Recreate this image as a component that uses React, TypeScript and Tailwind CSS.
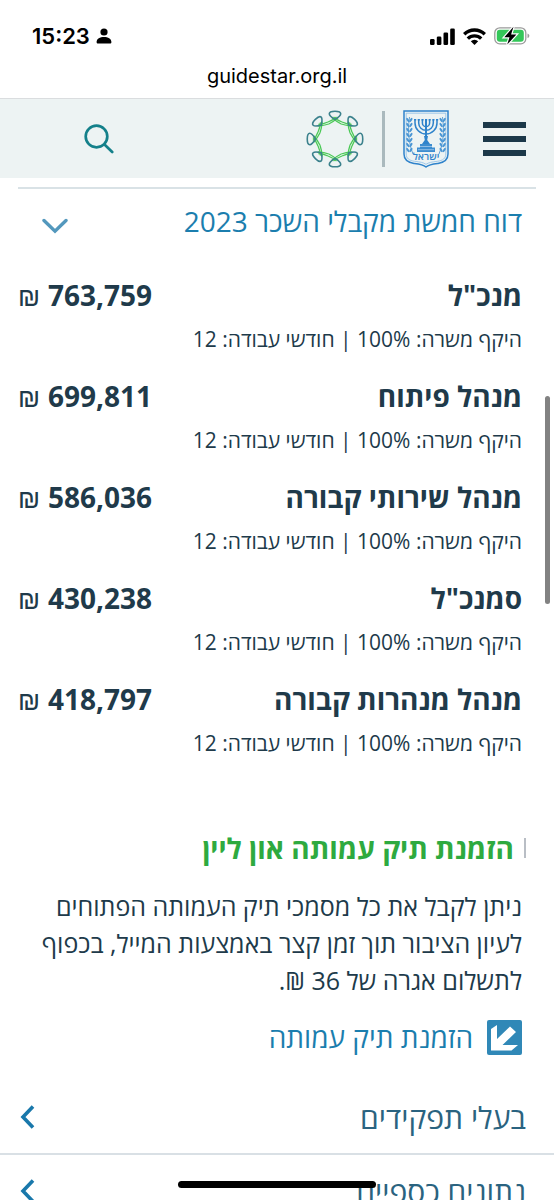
import React from 'react';

interface Salary {
  role: string;
  amount: string;
}

const SALARIES: Salary[] = [
  { role: 'מנכ"ל', amount: '763,759' },
  { role: 'מנהל פיתוח', amount: '699,811' },
  { role: 'מנהל שירותי קבורה', amount: '586,036' },
  { role: 'סמנכ"ל', amount: '430,238' },
  { role: 'מנהל מנהרות קבורה', amount: '418,797' },
];

const SECTIONS = ['בעלי תפקידים', 'נתונים כספיים'];

const IconPerson = () => (
  <svg width="16" height="16" viewBox="0 0 16 16" aria-hidden="true">
    <circle cx="8" cy="4" r="3.6" />
    <path d="M.6 14C.6 10.6 4 8.9 8 8.9s7.400 1.700 7.400 5.100c0 1-.5 1.500-1.500 1.500H2.100c-1 0-1.500-.5-1.500-1.500z" />
  </svg>
);

const IconSignal = () => (
  <svg width="25" height="17" viewBox="0 0 25 17" aria-hidden="true">
    <rect x="0" y="11" width="4.600" height="6" rx="1.300" />
    <rect x="6.800" y="8.500" width="4.600" height="8.500" rx="1.300" />
    <rect x="13.500" y="4.500" width="4.600" height="12.500" rx="1.300" />
    <rect x="20.200" y="0.500" width="4.600" height="16.500" rx="1.300" />
  </svg>
);

const IconWifi = () => (
  <svg width="23" height="17" viewBox="0 0 23 17" fill="none" stroke="#000" strokeWidth="3.400" aria-hidden="true">
    <path d="M1.200 6.200a14.700 14.700 0 0 1 20.600 0" />
    <path d="M4.800 10.600a9.500 9.500 0 0 1 13.400 0" />
    <path d="M7.800 13.300a5.300 5.300 0 0 1 7.400 0L11.500 17z" fill="#000" stroke="none" />
  </svg>
);

const IconBattery = () => (
  <svg width="36" height="20" viewBox="0 0 36 20" aria-hidden="true">
    <rect x=".8" y="1.800" width="31" height="16" rx="5" fill="#fff" stroke="#9b9b9b" strokeWidth="1.300" />
    <rect x="2.800" y="3.800" width="27" height="12" rx="3" fill="#34c759" />
    <path d="M33.500 7.500c2.400.8 2.400 3.800 0 4.600z" fill="#9b9b9b" />
    <path d="M19.500.8 10.300 11.300h5.200L13.200 18.600 22.400 8.400h-5.300z" stroke="#fff" strokeWidth="2.400" paintOrder="stroke" />
  </svg>
);

const IconSearch = () => (
  <svg width="30" height="30" viewBox="0 0 30 30" fill="none" stroke="#14808a" strokeWidth="2.700" strokeLinecap="round" aria-hidden="true">
    <circle cx="12.500" cy="12.500" r="10.800" />
    <path d="m20.500 20.500 7.700 7.500" />
  </svg>
);

const LOOPS = [0, 45, 90, 135, 180, 225, 270, 315];

const GuidestarLogo = () => (
  <svg width="58" height="58" viewBox="-29 -29 58 58" fill="none" aria-hidden="true">
    {LOOPS.map((angle) => (
      <g key={angle} transform={`rotate(${angle})`}>
        <g stroke="#4cc957" strokeWidth="1.300">
          <path d="M-7-17Q-2.500-18.600 1.500-22" />
          <path d="M-6.200-15Q-2-16.900 3.200-21.400" />
          <path d="M7-17Q2.500-18.600-1.500-22" />
          <path d="M6.200-15Q2-16.900-3.200-21.400" />
        </g>
        <path d="M0-19.400C-2.500-21-5.700-23.300-5.700-25.200C-5.700-28.600 5.700-28.600 5.700-25.200C5.700-23.300 2.500-21 0-19.400z" stroke="#3b818c" strokeWidth="1.600" />
      </g>
    ))}
  </svg>
);

const LEAVES = [10, 15, 20, 25, 30, 35, 40];

const OliveBranch = () => (
  <g>
    <path d="M6.500 7C5 18 5 32 10 44" stroke="#3f8ed0" strokeWidth=".8" fill="none" />
    {LEAVES.map((y) => (
      <g key={y} fill="#4b96d4">
        <ellipse cx="4.800" cy={y} rx="1.100" ry="2.500" transform={`rotate(-32 4.800 ${y})`} />
        <ellipse cx="7.900" cy={y} rx="1.100" ry="2.500" transform={`rotate(32 7.900 ${y})`} />
      </g>
    ))}
  </g>
);

const StateEmblem = () => (
  <svg width="46" height="58" viewBox="0 0 46 58" fill="none" aria-hidden="true">
    <path d="M1 1h44v43c0 6-4 8.500-10 9.500-6 .7-9 1-12 3.500-3-2.500-6-2.800-12-3.500C5 52.500 1 50 1 44z" stroke="#2f83cb" strokeWidth="1.500" />
    <path d="M3.200 3.200h39.600V44c0 4.500-3 6.500-8.500 7.300-5.500.7-8.300 1-11.300 3-3-2-5.800-2.300-11.300-3C6.200 50.500 3.200 48.500 3.200 44z" stroke="#8cbde6" strokeWidth=".8" />
    <OliveBranch />
    <g transform="matrix(-1 0 0 1 46 0)">
      <OliveBranch />
    </g>
    <g stroke="#2f83cb" strokeWidth="1.500">
      <path d="M12 10v3a11 11 0 0 0 22 0v-3" />
      <path d="M15.700 10v3a7.300 7.300 0 0 0 14.600 0v-3" />
      <path d="M19.400 10v3a3.600 3.600 0 0 0 7.200 0v-3" />
      <path d="M23 9v24" strokeWidth="2" />
      <path d="M11 9.700h2.200m1.500 0h2.200m1.500 0h2.200m1.400 0h2.200m1.400 0h2.200m1.500 0h2.200m1.500 0h2.200" />
    </g>
    <path d="M21 26h4l-.8 4 2.800 4h-8l2.800-4z" fill="#2f83cb" />
    <path d="M17 34h12v3.500h3V42H14v-4.500h3z" fill="#3d8dd0" />
    <path d="M17 36.500h12M15 39.700h16" stroke="#b6d4ee" strokeWidth=".7" />
    <text x="23" y="50" textAnchor="middle" fontSize="10" fontWeight="600" fill="#2f83cb" fontFamily="'Open Sans', sans-serif">
      ישראל
    </text>
  </svg>
);

const IconChevronDown = () => (
  <svg width="26" height="16" viewBox="0 0 26 16" fill="none" stroke="#5398bd" strokeWidth="3.400" strokeLinecap="round" aria-hidden="true">
    <path d="m2 2.500 11 10.700L24 2.500" />
  </svg>
);

const IconChevronLeft = () => (
  <svg width="15" height="24" viewBox="0 0 15 24" fill="none" stroke="#1978ab" strokeWidth="3.600" aria-hidden="true">
    <path d="M13 1.500 3 12l10 10.500" />
  </svg>
);

const IconExternal = () => (
  <svg width="35" height="35" viewBox="0 0 35 35" className="shrink-0" aria-hidden="true">
    <rect width="35" height="35" rx="2" fill="#3088b7" />
    <path d="M4 9 10 5v14L23 6.500l6 5.500L15.500 25H31l-6.500 5.500H4z" fill="#fff" />
  </svg>
);

const StatusBar = () => (
  <div dir="ltr" className="flex h-14 items-center justify-between pt-4 pr-6 pl-8">
    <div className="flex items-center gap-1.5 font-[Inter,sans-serif] text-[22px] leading-7 font-semibold">
      15:23
      <IconPerson />
    </div>
    <div className="flex items-center gap-2">
      <IconSignal />
      <IconWifi />
      <IconBattery />
    </div>
  </div>
);

const Header = () => (
  <header className="flex h-20 shrink-0 items-center justify-between border-t border-[#dadddf] bg-[#edf3f3] pr-7 pl-21">
    <div className="flex items-center gap-[18px]">
      <button type="button" aria-label="תפריט" className="flex w-[43px] flex-col gap-2">
        <span className="h-1.5 bg-[#1c3849]" />
        <span className="h-1.5 bg-[#1c3849]" />
        <span className="h-1.5 bg-[#1c3849]" />
      </button>
      <a href="#state" aria-label="מדינת ישראל" className="pr-4">
        <StateEmblem />
      </a>
      <span className="h-14 w-[3px] bg-[#aab9bd]" />
      <a href="#home" aria-label="גיידסטאר">
        <GuidestarLogo />
      </a>
    </div>
    <button type="button" aria-label="חיפוש">
      <IconSearch />
    </button>
  </header>
);

const SalaryRow: React.FC<Salary> = ({ role, amount }) => (
  <li className="h-[101px]">
    <div className="flex items-center justify-between text-[28px] leading-10 font-bold">
      <h3>{role}</h3>
      <p dir="ltr" className="flex items-baseline gap-2">
        <span className="font-['Liberation_Sans',sans-serif] text-[26px] leading-none font-normal">₪</span> {amount}
      </p>
    </div>
    <p className="mt-1 text-[21px] leading-10">היקף משרה: 100% | חודשי עבודה: 12</p>
  </li>
);

const App: React.FC = () => {
  return (
    <div dir="rtl" className="relative flex h-screen flex-col overflow-hidden bg-white font-['Open_Sans',sans-serif] text-[#203a4a]">
      <div className="h-[98px] shrink-0 text-black">
        <StatusBar />
        <p dir="ltr" className="text-center font-[Inter,sans-serif] text-xl leading-10">guidestar.org.il</p>
      </div>
      <Header />

      <main className="shrink-0">
        <section className="mx-[18px] mt-[9px] border-t-2 border-[#d9e2e6] pr-3.5">
          <button type="button" className="flex w-full items-center justify-between pt-3 pl-6 text-[28px] leading-10 text-[#1b7eae]">
            דוח חמשת מקבלי השכר 2023
            <span className="pt-2.5">
              <IconChevronDown />
            </span>
          </button>
          <ul className="pt-[34px]">
            {SALARIES.map((salary) => (
              <SalaryRow key={salary.role} {...salary} />
            ))}
          </ul>
        </section>

        <section className="mt-12 pr-7 pl-6">
          <h2 className="flex items-center gap-2.5 text-[28px] leading-10 font-bold text-[#2eaa3f]">
            <span className="h-5 w-0.5 bg-[#b9bec5]" />
            הזמנת תיק עמותה און ליין
          </h2>
          <p className="mt-5 pr-1 text-[25px] leading-[37px]">
            ניתן לקבל את כל מסמכי תיק העמותה הפתוחים לעיון הציבור תוך זמן קצר באמצעות המייל, בכפוף לתשלום אגרה של 36 ₪.
          </p>
          <a href="#order" className="mt-[18px] flex items-center gap-3.5 pr-1 text-[28px] leading-10 text-[#1b7eae]">
            <IconExternal />
            הזמנת תיק עמותה
          </a>
        </section>

        <div className="mt-6">
          {SECTIONS.map((title) => (
            <button
              key={title}
              type="button"
              className="flex h-[74px] w-full items-center justify-between border-b-2 border-[#d9e0e5] pr-7 pl-5 text-[30px] text-[#2a6380]"
            >
              {title}
              <IconChevronLeft />
            </button>
          ))}
        </div>
      </main>

      {/* scroll thumb and home indicator float over the page */}
      <div className="absolute top-[33%] right-1 h-52 w-[5px] rounded-full bg-[#828282]" />
      <div className="absolute bottom-3 left-1/2 h-[7px] w-[198px] -translate-x-1/2 rounded-full bg-black" />
    </div>
  );
};

export default App;
